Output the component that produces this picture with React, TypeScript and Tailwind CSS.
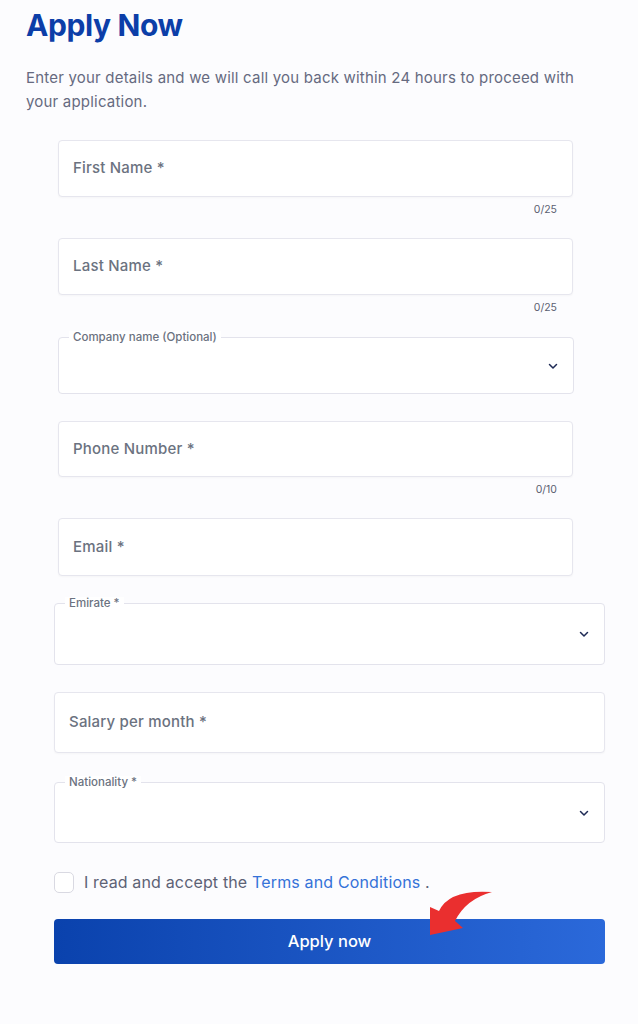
import React from 'react';

function ChevronDown() {
  return (
    <svg width="12" height="12" viewBox="0 0 24 24" fill="none" stroke="#1e2a55" strokeWidth={3} strokeLinecap="round" strokeLinejoin="round">
      <path d="M5 9l7 7 7-7" />
    </svg>
  );
}

function TextField({ label, counter, className = '', height = 'h-[57px]' }: { label: string; counter?: string; className?: string; height?: string }) {
  return (
    <div className={className}>
      <div className={`${height} flex items-center px-[14px] bg-white border border-[#e6e6ee] rounded-[4px] shadow-[0_1px_2px_rgba(0,0,0,0.03)]`}>
        <span className="text-[15px] tracking-[0.2px] font-medium text-[#6b7280]">{label}</span>
      </div>
      {counter && (
        <div className="flex justify-end pr-4 pt-[6px] h-[21px] text-[10.5px] text-[#5b6070] leading-[14px]">{counter}</div>
      )}
    </div>
  );
}

function SelectField({ label, className = '', height = 'h-[62px]' }: { label: string; className?: string; height?: string }) {
  return (
    <div className={`relative ${height} border border-[#e3e3ec] rounded-[4px] bg-white flex items-center justify-end pr-[14px] ${className}`}>
      <span className="absolute left-[10px] -top-[7px] px-[4px] bg-white text-[11.5px] leading-[12px] text-[#6b7280] font-medium">{label}</span>
      <ChevronDown />
    </div>
  );
}

export default function App() {
  return (
    <div className="min-h-[1024px] bg-[#fcfcfe] pl-[26px] pt-[6px] font-['Inter',sans-serif]">
      {/* Heading */}
      <h1 className="text-[30px] leading-[38px] font-bold tracking-[-0.4px] text-[#0c3ea8]">Apply Now</h1>
      <p className="mt-[22px] w-[560px] text-[15px] tracking-[0.2px] leading-[24px] text-[#666a80]">
        Enter your details and we will call you back within 24 hours to proceed with your application.
      </p>

      {/* Form */}
      <div className="mt-[26px] w-[579px]">
        <div className="ml-[32px] w-[515px]">
          <TextField label="First Name *" counter="0/25" />
          <TextField label="Last Name *" counter="0/25" className="mt-[20px]" />
          <SelectField label="Company name (Optional)" height="h-[57px]" className="mt-[21px] mr-[-1px]" />
          <TextField label="Phone Number *" counter="0/10" className="mt-[27px]" height="h-[56px]" />
          <TextField label="Email *" className="mt-[20px]" height="h-[58px]" />
        </div>
        <div className="ml-[28px] w-[551px]">
          <SelectField label="Emirate *" className="mt-[27px]" />
          <TextField label="Salary per month *" className="mt-[27px]" height="h-[61px]" />
          <SelectField label="Nationality *" height="h-[61px]" className="mt-[29px]" />

          <div className="mt-[27px] flex items-center gap-[10px]">
            <div className="w-[20px] h-[21px] rounded-[5px] border border-[#d9d9e2] bg-white" />
            <span className="text-[16px] tracking-[0.15px] text-[#5d6275]">
              I read and accept the <span className="text-[#3572d8]">Terms and Conditions</span> .
            </span>
          </div>

          <div className="relative mt-[25px]">
            <button className="w-full h-[45px] rounded-[4px] bg-linear-to-r from-[#0a42ad] to-[#2b69da] text-white text-[16.5px] font-medium">
              Apply now
            </button>
            {/* annotation arrow */}
            <svg className="absolute left-[372px] -top-[33px]" width="70" height="52" viewBox="0 0 70 52">
              <path d="M4 49 L4 21 L13 25 Q 23 3 66 6 Q 40 13 29 35 L 37 42 Z" fill="#ea2f2f" />
            </svg>
          </div>
        </div>
      </div>
    </div>
  );
}
